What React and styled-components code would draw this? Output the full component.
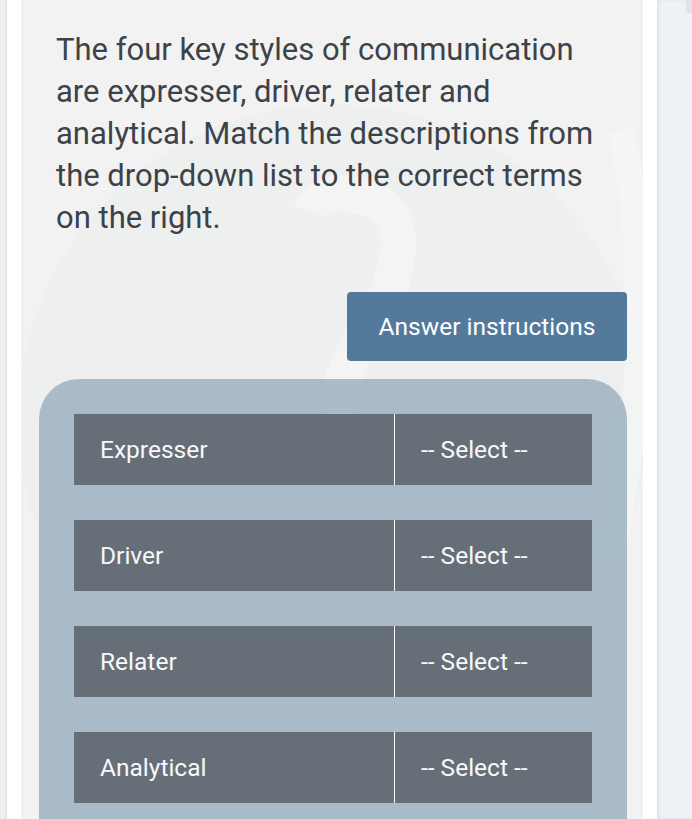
import React from "react";
import styled, { createGlobalStyle } from "styled-components";

const GlobalStyle = createGlobalStyle`
  html, body {
    margin: 0;
    padding: 0;
    background: #ffffff;
    font-family: Roboto, "Liberation Sans", Arial, sans-serif;
  }
`;

const Page = styled.div`
  display: flex;
  height: 819px;
  overflow: hidden;
`;

const Gutter = styled.div`
  width: 7px;
  flex: none;
  background: #eef1f3;
  box-shadow: inset -1px 0 2px rgba(0, 0, 0, 0.08);
`;

const Column = styled.div`
  flex: none;
  padding: 0 14px;
  background: #ffffff;
`;

const SidePanel = styled.div`
  flex: 1;
  position: relative;
  background: #eff2f4;
  box-shadow: inset 2px 0 3px rgba(0, 0, 0, 0.07);
`;

const SideTab = styled.div`
  position: absolute;
  top: 0;
  right: 0;
  width: 6px;
  height: 13px;
  background: #e1e4e6;
`;

const Card = styled.div`
  position: relative;
  width: 622px;
  height: 819px;
  box-sizing: border-box;
  padding: 29px 16px 0 18px;
  background: #f2f2f2;
  display: flex;
  flex-direction: column;
  overflow: hidden;
`;

const Watermark = styled.svg`
  position: absolute;
  left: 0;
  top: 0;
  width: 622px;
  height: 819px;
  pointer-events: none;
`;

const Question = styled.p`
  position: relative;
  flex: none;
  margin: 0 26px 0 17px;
  font-size: 31px;
  line-height: 42px;
  color: #3c4348;
`;

const AnswerButton = styled.button`
  position: relative;
  flex: none;
  align-self: flex-end;
  margin-top: 53px;
  width: 280px;
  height: 69px;
  border: none;
  border-radius: 4px;
  background: #53799b;
  color: #ffffff;
  font-family: inherit;
  font-size: 24.5px;
`;

const MatchPanel = styled.div`
  position: relative;
  flex: 1 0 auto;
  margin-top: 18px;
  padding: 35px;
  background: rgba(163, 182, 198, 0.92);
  border-radius: 40px 40px 0 0;
  display: flex;
  flex-direction: column;
  gap: 35px;
`;

const Row = styled.div`
  flex: none;
  display: grid;
  grid-template-columns: 320px 1px 1fr;
  height: 71px;
  background: #666f77;
  color: #f7f8f9;
  font-size: 24.5px;
`;

const Cell = styled.div`
  display: flex;
  align-items: center;
  padding-left: 26px;
`;

const Divider = styled.div`
  background: #ffffff;
`;

const terms = ["Expresser", "Driver", "Relater", "Analytical"];

export default function App() {
  return (
    <>
      <GlobalStyle />
      <Page>
        <Gutter />
        <Column>
          <Card>
            <Watermark viewBox="0 0 622 819">
              <circle cx="312" cy="420" r="315" fill="#e9eaeb" opacity="0.45" />
              <path
                d="M290 212 Q296 192 326 194 Q380 198 377 250 Q372 300 340 340 Q316 375 320 420"
                fill="none"
                stroke="#f6f6f6"
                strokeWidth="36"
                opacity="0.7"
              />
              <path
                d="M600 130 Q640 330 590 560"
                fill="none"
                stroke="#f6f6f6"
                strokeWidth="26"
                opacity="0.6"
              />
            </Watermark>
            <Question>
              The four key styles of communication are expresser, driver,
              relater and analytical. Match the descriptions from the drop-down
              list to the correct terms on the right.
            </Question>
            <AnswerButton>Answer instructions</AnswerButton>
            <MatchPanel>
              {terms.map(t => (
                <Row key={t}>
                  <Cell>{t}</Cell>
                  <Divider />
                  <Cell>-- Select --</Cell>
                </Row>
              ))}
            </MatchPanel>
          </Card>
        </Column>
        <SidePanel>
          <SideTab />
        </SidePanel>
      </Page>
    </>
  );
}
